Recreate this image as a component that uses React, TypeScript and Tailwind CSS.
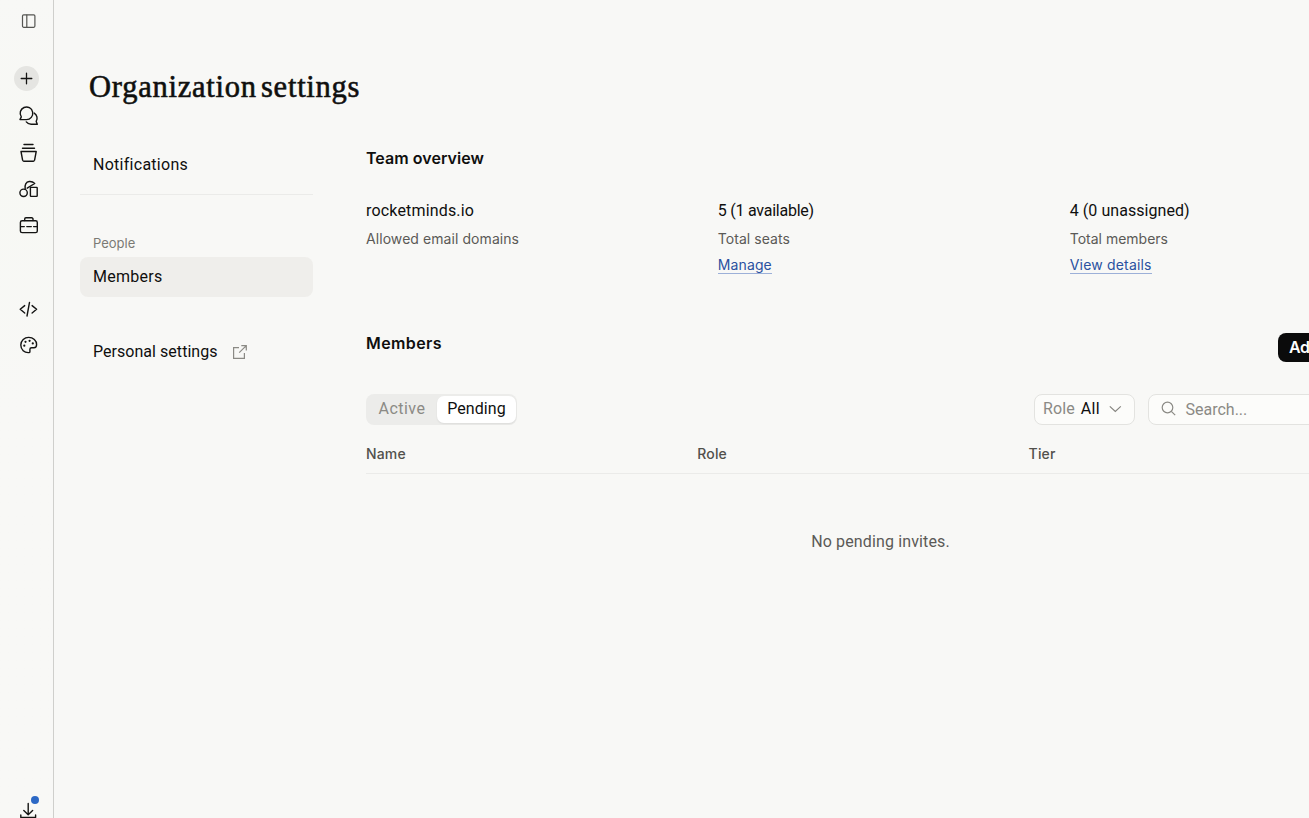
import type { ReactNode } from "react";

function Icon({ children, className = "" }: { children: ReactNode; className?: string }) {
  return (
    <svg
      viewBox="0 0 22 22"
      fill="none"
      stroke="currentColor"
      strokeWidth="1.4"
      strokeLinecap="round"
      strokeLinejoin="round"
      className={`block h-[22px] w-[22px] shrink-0 ${className}`}
    >
      {children}
    </svg>
  );
}

function Rail() {
  return (
    <nav className="flex h-full w-[54px] shrink-0 flex-col border-r border-[#cfcfcc] bg-linear-to-b from-[#f8f8f6] via-[#f7f8f4] via-20% to-[#f8f8f6] to-50% pt-2.5 pl-[18px] text-[#141413]">
      <Icon className="text-[#555552]">
        <rect x="4.5" y="4.9" width="12.4" height="12.4" rx="1.2" strokeWidth="1.2" />
        <path d="M8.8 5v12.2" strokeWidth="1.2" />
      </Icon>
      <div className="mt-[34px] -ml-1 flex h-[25px] w-[25px] items-center justify-center rounded-full bg-[#e5e5e2]">
        <Icon>
          <path d="M10.5 5.2v10.6M5.2 10.5h10.6" strokeWidth="1.3" />
        </Icon>
      </div>
      <Icon className="mt-[14px]">
        <path d="M2 14.6 3.3 11.9A6.3 6.3 0 1 1 8.4 14.6Z" />
        <path d="M16.2 8.1a6 6 0 0 1 2 8.3l1.1 2.9h-5.6a6.2 6.2 0 0 1-5.4-2.4" />
      </Icon>
      <Icon className="mt-[15px]">
        <path d="M6 2.5h9M4.5 6.2h12M3 9.5h15.2l-1.6 8.7a1.3 1.3 0 0 1-1.2 1H5.8a1.3 1.3 0 0 1-1.2-1Z" />
      </Icon>
      <Icon className="mt-[14px]">
        <circle cx="5.6" cy="14.8" r="3.7" />
        <rect x="12.4" y="9.4" width="6.8" height="9" rx=".6" />
        <path d="M7.2 11c-.8-3.8.9-7.2 4-7.5 2.2-.2 4.1.5 5.5 2L9.2 10.2" />
      </Icon>
      <Icon className="mt-[14px]">
        <rect x="2.4" y="6.8" width="16.9" height="11.8" rx="1.7" />
        <path d="M6.7 6.6V5a1.2 1.2 0 0 1 1.2-1.2h5.9A1.2 1.2 0 0 1 15 5v1.6" />
        <path d="M2.6 12.6h3.7M8.8 12.6h4.5M15.6 12.6h3.5" />
      </Icon>
      <Icon className="mt-[62px]">
        <path d="m6.7 7.6-4.5 3.7 4.5 3.7M11.5 4.4 9 18M14.1 7.6l4.5 3.7-4.5 3.7" />
      </Icon>
      <Icon className="mt-[14px]">
        <path d="M11 18.6C6.4 19 2.8 15.6 2.8 11a7.8 7.8 0 0 1 7.9-7.6c4.5 0 7.9 3.2 7.9 7.1 0 2-1 3.3-2.7 3.3h-2.3c-1.1 0-1.7.6-1.7 1.5v2.4c0 .5-.3.9-.9.9Z" />
        <g fill="currentColor" stroke="none">
          <circle cx="7.5" cy="7.8" r="1.1" />
          <circle cx="11.6" cy="6.8" r="1.1" />
          <circle cx="14.8" cy="9.4" r="1.1" />
          <circle cx="6.3" cy="11.7" r="1.1" />
        </g>
      </Icon>
      <div className="relative mt-auto h-[22px] w-[22px]">
        <Icon>
          <path d="M10.2 7.5v11M5.8 14.6l4.4 4.2 4.4-4.2M2.8 19v2.4h14.8V19" />
        </Icon>
        <span className="absolute top-0 left-[13px] h-2 w-2 rounded-full bg-[#2c68c5]" />
      </div>
    </nav>
  );
}

function SideNav() {
  return (
    <aside className="w-[233px] text-[16px] leading-5">
      <div className="flex h-10 items-center pt-px pl-[13px] tracking-[0.27px]">Notifications</div>
      <div className="mt-[10px] border-t border-[#ebebe9]" />
      <div className="mt-[38px] flex h-5 items-center pl-[13px] font-[Inter,sans-serif] text-[13px] text-[#7b7a75]">People</div>
      <div className="mt-1 flex h-10 items-center rounded-lg bg-[#efeeeb] pb-px pl-[13px] tracking-[0.27px]">Members</div>
      <div className="mt-[35px] flex h-10 items-center pl-[13px]">
        <span className="w-[124px] tracking-[0.04px] whitespace-nowrap">Personal settings</span>
        <svg viewBox="0 0 16 16" fill="none" stroke="#8b8a85" strokeWidth="1.2" className="ml-[15px] h-4 w-4">
          <path d="M7 3.6H1.6v10.8h10.8V9M9.3 1.6h5v5M14.3 1.6 7.2 8.7" />
        </svg>
      </div>
    </aside>
  );
}

function Stat({ value, label, link, valueClass, labelClass, linkClass }: { value: string; label: string; link?: string; valueClass: string; labelClass: string; linkClass?: string }) {
  return (
    <div className="flex flex-col items-start">
      <div className={`text-[16px] leading-6 ${valueClass}`}>{value}</div>
      <div className={`mt-1.5 font-[Inter,sans-serif] text-[14px] leading-5 text-[#5b5a56] ${labelClass}`}>{label}</div>
      {link && (
        <a className={`mt-[7px] border-b border-[#9cb0d8] font-[Inter,sans-serif] text-[14px] leading-[17px] text-[#2a51a0] ${linkClass}`}>{link}</a>
      )}
    </div>
  );
}

function Members() {
  return (
    <section className="mt-[55px]">
      <div className="flex h-[29px] items-center justify-between">
        <h2 className="-mt-2.5 font-[Inter,sans-serif] text-[16px] leading-6 font-semibold tracking-[0.4px]">Members</h2>
        <button className="flex h-[29px] w-[117px] items-center rounded-lg bg-[#0b0b0b] pb-0.5 pl-[11px] font-[Inter,sans-serif] text-[16px] font-semibold tracking-[-0.3px] whitespace-nowrap text-white">
          Add member
        </button>
      </div>
      <div className="mt-8 flex items-start justify-between">
        <div className="flex h-[31px] w-[151px] items-start rounded-lg bg-[#ececea] p-[1px] pt-[1.5px]">
          <div className="flex h-[27px] w-[70px] items-center justify-center text-[16px] tracking-[0.45px] text-[#8b8a85]">Active</div>
          <div className="flex h-[27px] w-[79px] items-center justify-center rounded-[7px] bg-white text-[16px] tracking-[0.07px] shadow-[0_1px_2px_rgba(0,0,0,0.07)]">Pending</div>
        </div>
        <div className="flex gap-[13px]">
          <div className="flex h-[31px] w-[101px] items-center rounded-lg border border-[#e3e3e0] bg-[#fcfcfa] pb-px pl-2 text-[16px]">
            <span className="tracking-[0.1px] text-[#8b8a85]">Role</span>
            <span className="ml-1.5 tracking-[0.3px]">All</span>
            <svg viewBox="0 0 14 14" fill="none" stroke="#85847f" strokeWidth="1.2" className="ml-2 h-3.5 w-3.5">
              <path d="m1.8 4.4 5.5 5 5.5-5" />
            </svg>
          </div>
          <div className="flex h-[31px] w-[247px] items-center rounded-lg border border-[#e3e3e0] bg-[#fcfcfa] pl-3 text-[16px] text-[#8b8a85]">
            <svg viewBox="0 0 16 16" fill="none" stroke="currentColor" strokeWidth="1.2" className="-mt-0.5 h-4 w-4">
              <circle cx="6.5" cy="6.5" r="5.3" />
              <path d="m10.3 10.3 3.9 3.9" />
            </svg>
            <span className="ml-[8.5px]">Search...</span>
          </div>
        </div>
      </div>
      <div className="mt-[19px] grid h-[30px] grid-cols-[331.3px_331.3px_1fr] border-b border-[#ebebe9] font-[Inter,sans-serif] text-[14px] leading-5 font-medium tracking-[0.15px] text-[#51504c]">
        <span>Name</span>
        <span>Role</span>
        <span>Tier</span>
      </div>
      <p className="mt-14 text-center text-[16px] leading-6 tracking-[0.13px] text-[#5b5a56]">No pending invites.</p>
    </section>
  );
}

export default function App() {
  return (
    <div className="flex h-screen w-full overflow-hidden bg-[#f8f8f6] font-[Roboto,sans-serif] text-[#0f0f0e]">
      <Rail />
      <main className="min-w-0 flex-1 overflow-hidden pl-[26px]">
        <h1 className="pt-[67px] pl-[9px] font-['Liberation_Serif',serif] text-[30.5px] leading-10 tracking-[0.76px] [word-spacing:-4.2px] [-webkit-text-stroke:0.6px_#141413]">
          Organization settings
        </h1>
        <div className="mt-[37px] flex w-[1315px] gap-[53px]">
          <SideNav />
          <div className="w-[1029px] shrink-0 pt-0.5">
            <h2 className="font-[Inter,sans-serif] text-[16px] leading-6 font-semibold tracking-[0.05px]">Team overview</h2>
            <div className="mt-[29px] grid h-[79px] grid-cols-3 gap-[26.6px]">
              <Stat value="rocketminds.io" label="Allowed email domains" valueClass="tracking-[0.17px]" labelClass="tracking-[0.07px]" />
              <Stat value="5 (1 available)" label="Total seats" link="Manage" valueClass="tracking-[-0.25px]" labelClass="tracking-[0.04px]" linkClass="tracking-[0.1px]" />
              <Stat value="4 (0 unassigned)" label="Total members" link="View details" valueClass="tracking-[0.06px]" labelClass="" linkClass="tracking-[0.18px]" />
            </div>
            <Members />
          </div>
        </div>
      </main>
    </div>
  );
}
